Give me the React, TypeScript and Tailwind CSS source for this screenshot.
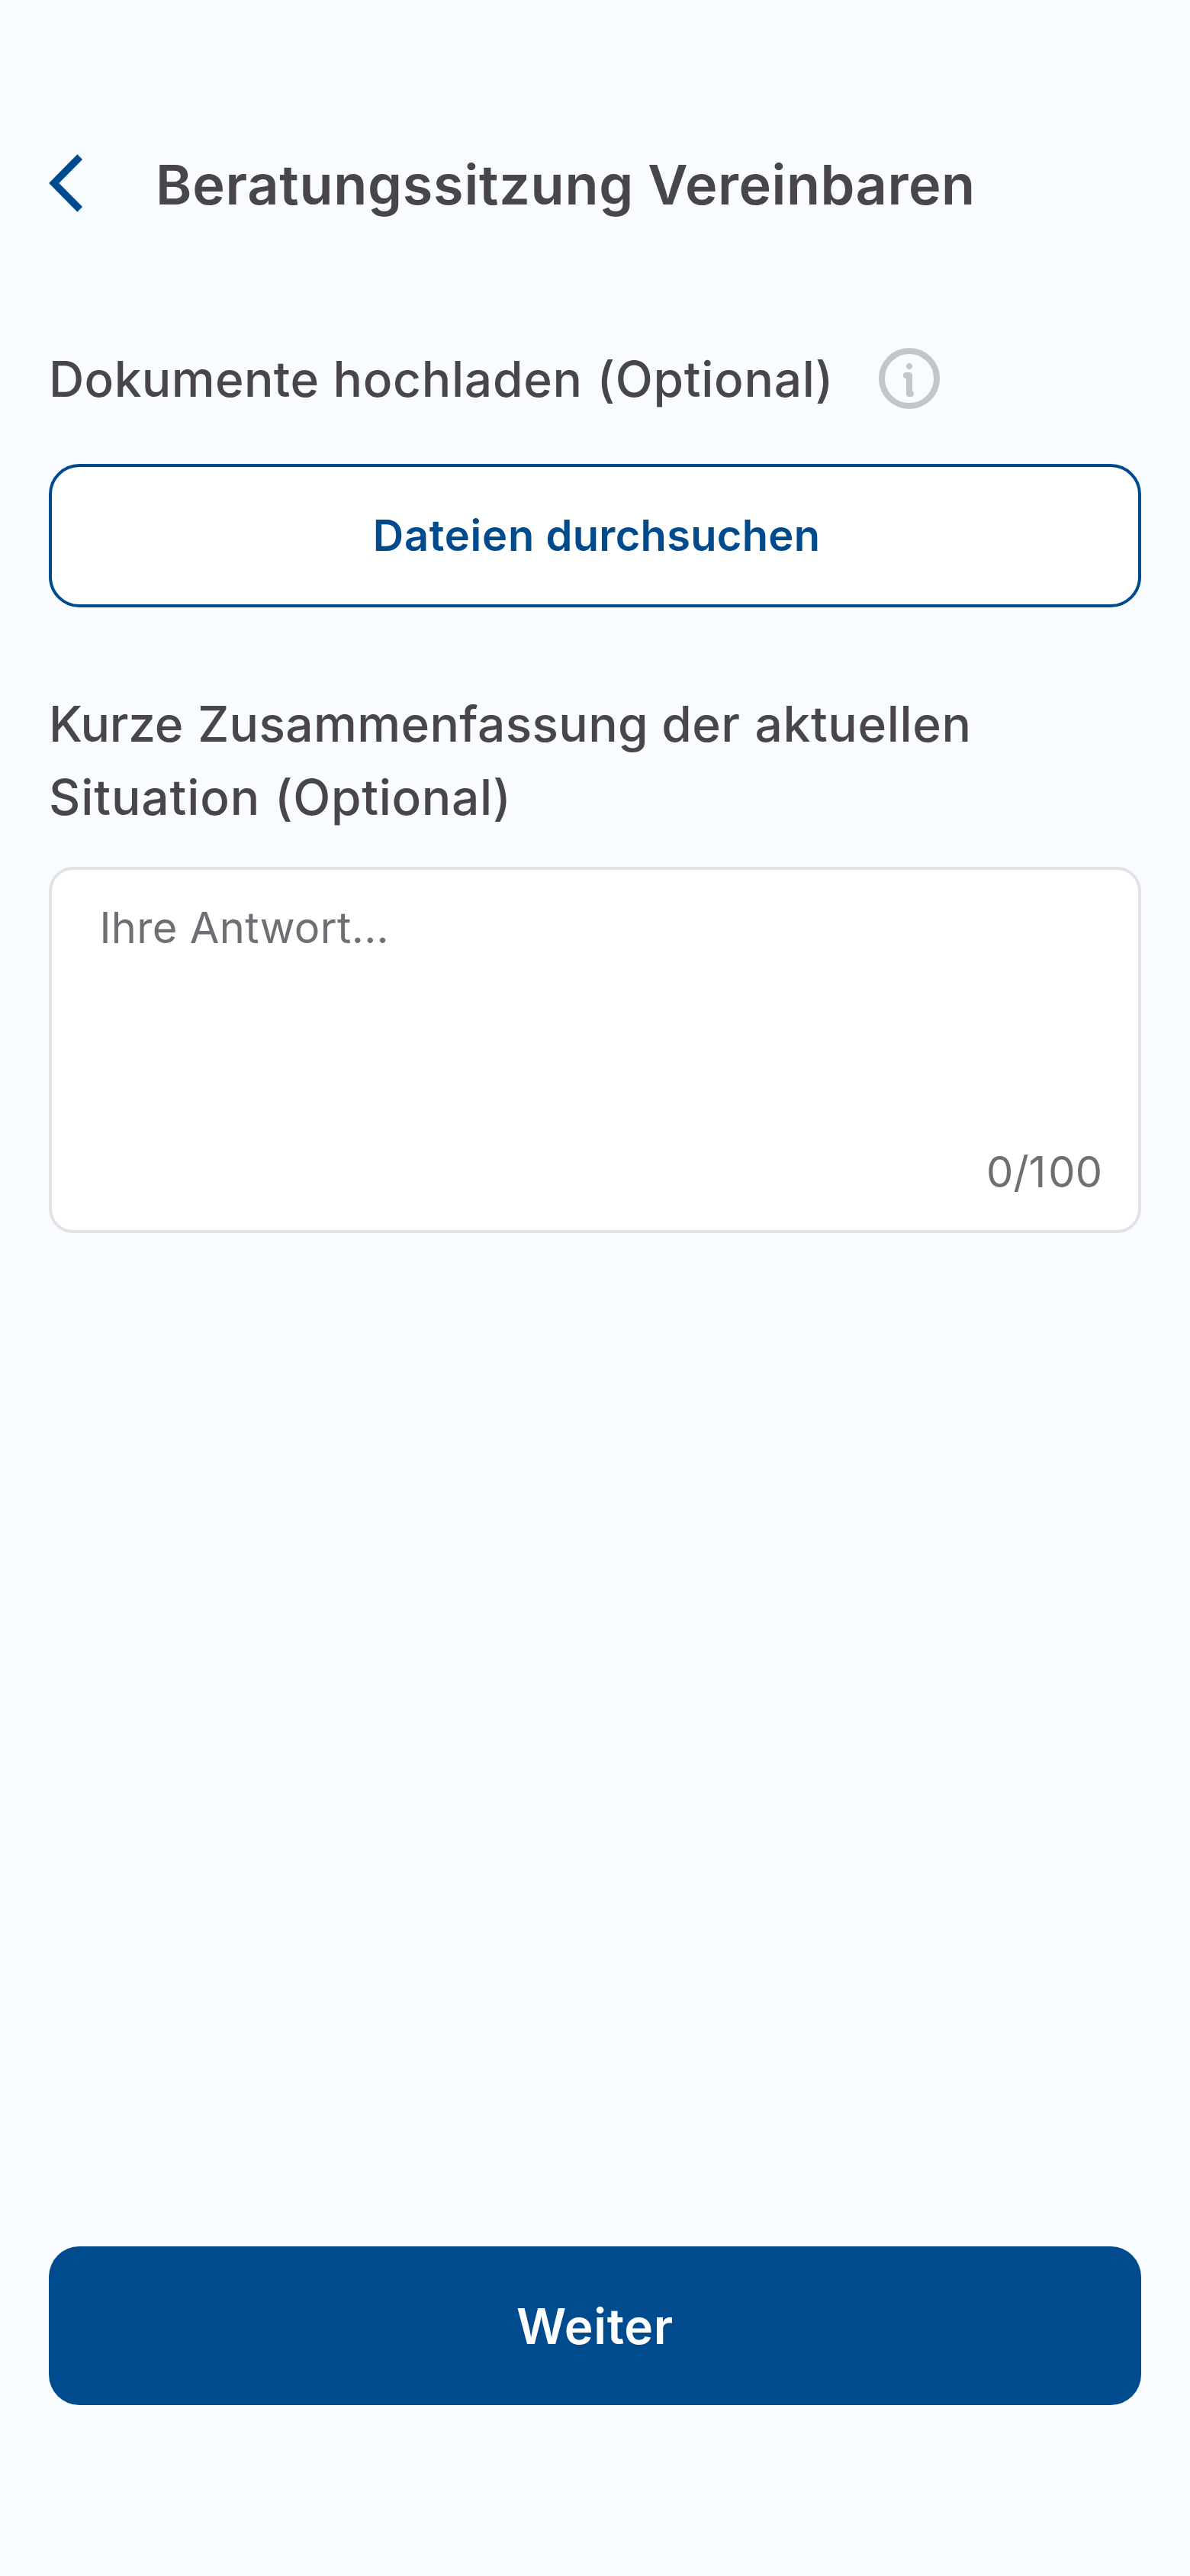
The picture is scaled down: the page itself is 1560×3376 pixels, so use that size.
export default function App() {
  return (
    <main className="flex h-[3376px] w-[1560px] flex-col bg-[#f9fcff] px-16 font-['Inter',sans-serif] text-[#49454d]">
      <header className="mt-[192px] flex h-24 items-center">
        <button aria-label="Zurück" className="w-[140px] shrink-0">
          <svg width="48" height="80" viewBox="0 0 48 80" fill="none" stroke="#004b8d" strokeWidth="9.4">
            <path d="M40.7 5.6L6.7 40L40.7 74.4" />
          </svg>
        </button>
        <h1 className="mt-1 whitespace-nowrap text-[72px] font-semibold leading-[96px]">
          <span className="tracking-[0.74px]">Beratungssitzung</span> <span className="tracking-[0.5px]">Vereinbaren</span>
        </h1>
      </header>
      <div className="mt-[160px] flex h-24 items-center">
        <h2 className="mt-0.5 w-[1088px] shrink-0 whitespace-nowrap text-[64px] font-medium leading-[96px]">
          <span className="tracking-[0.4px]">Dokumente</span> <span className="ml-[0.9px] tracking-[0.75px]">hochladen</span>{' '}
          <span className="ml-[1.7px] tracking-[0.68px]">(Optional)</span>
        </h2>
        <svg width="80" height="80" viewBox="0 0 80 80" fill="none" stroke="#c3c4cc" strokeWidth="8" strokeLinecap="round" strokeLinejoin="round">
          <circle cx="40" cy="40" r="36" />
          <circle cx="40" cy="24" r="4" fill="#c3c4cc" stroke="none" />
          <path d="M36 36H40V60H42" />
        </svg>
      </div>
      <button className="mt-[64px] h-[188px] rounded-[40px] border-4 border-[#004b8d] bg-white pl-1 text-[56px] font-semibold text-[#004b8d]">
        <span className="tracking-[0.75px]">Dateien</span> <span className="ml-[0.5px] tracking-[0.3px]">durchsuchen</span>
      </button>
      <h2 className="mt-[105px] whitespace-nowrap text-[64px] font-medium leading-[96px]">
        <span className="tracking-[-0.25px]">Kurze</span> <span className="ml-[2px] tracking-[0.38px]">Zusammenfassung</span>{' '}
        <span className="tracking-[0.5px]">der</span> <span className="ml-[1.8px] tracking-[0.65px]">aktuellen</span>
        <br />
        <span className="tracking-[0.9px]">Situation</span> <span className="ml-[1.6px] tracking-[0.68px]">(Optional)</span>
      </h2>
      <div className="mt-[43px] flex h-[480px] flex-col justify-between rounded-[32px] border-4 border-[#e4e1e8] bg-white py-[36px] pl-[62.5px] pr-[47px] text-[56px] leading-[80px] text-[#6f6e75]">
        <span className="tracking-[0.33px]">Ihre Antwort...</span>
        <span className="self-end">0/<span className="tracking-[3px]">1</span>00</span>
      </div>
      <button className="mt-[1328px] h-[208px] rounded-[40px] bg-[#004b8d] pt-0.5 text-[64px] font-semibold tracking-[0.65px] text-white">Weiter</button>
    </main>
  );
}
